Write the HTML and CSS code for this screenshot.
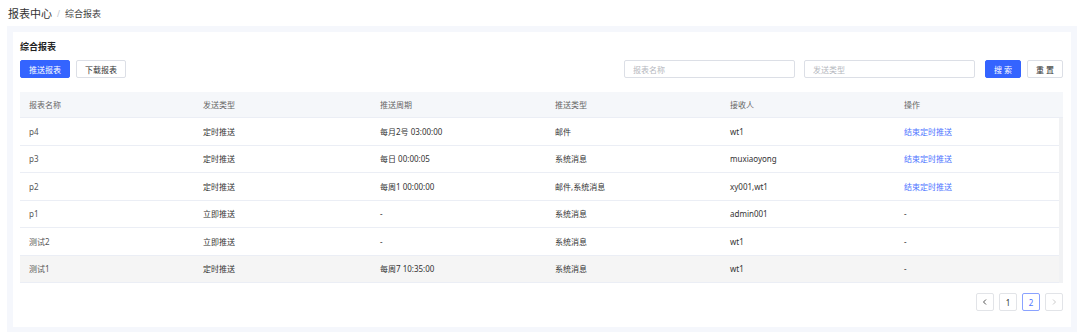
FILE: index.html
```html
<!DOCTYPE html>
<html lang="zh-CN">
<head>
    <meta charset="UTF-8">
    <title>综合报表 - 报表中心</title>
    <link rel="stylesheet" href="styles.css">
</head>
<body>
    <div class="breadcrumb">
        <span class="crumb-root">报表中心</span>
        <span class="crumb-sep">/</span>
        <span class="crumb-current">综合报表</span>
    </div>

    <div class="panel">
        <div class="card">
            <h2 class="card-title">综合报表</h2>

            <div class="toolbar">
                <div class="toolbar-left">
                    <button class="btn btn-primary">推送报表</button>
                    <button class="btn">下载报表</button>
                </div>
                <div class="toolbar-right">
                    <input class="field" type="text" placeholder="报表名称">
                    <input class="field" type="text" placeholder="发送类型">
                    <button class="btn btn-primary btn-sm">搜 索</button>
                    <button class="btn btn-sm">重 置</button>
                </div>
            </div>

            <div class="table">
                <div class="row head">
                    <div>报表名称</div>
                    <div>发送类型</div>
                    <div>推送周期</div>
                    <div>推送类型</div>
                    <div>接收人</div>
                    <div>操作</div>
                </div>
                <div class="table-body">
                    <div class="row">
                        <div class="muted">p4</div>
                        <div>定时推送</div>
                        <div>每月2号 03:00:00</div>
                        <div>邮件</div>
                        <div>wt1</div>
                        <div><a href="#" class="link">结束定时推送</a></div>
                    </div>
                    <div class="row">
                        <div class="muted">p3</div>
                        <div>定时推送</div>
                        <div>每日 00:00:05</div>
                        <div>系统消息</div>
                        <div>muxiaoyong</div>
                        <div><a href="#" class="link">结束定时推送</a></div>
                    </div>
                    <div class="row">
                        <div class="muted">p2</div>
                        <div>定时推送</div>
                        <div>每周1 00:00:00</div>
                        <div>邮件,系统消息</div>
                        <div>xy001,wt1</div>
                        <div><a href="#" class="link">结束定时推送</a></div>
                    </div>
                    <div class="row">
                        <div class="muted">p1</div>
                        <div>立即推送</div>
                        <div>-</div>
                        <div>系统消息</div>
                        <div>admin001</div>
                        <div>-</div>
                    </div>
                    <div class="row">
                        <div class="muted">测试2</div>
                        <div>立即推送</div>
                        <div>-</div>
                        <div>系统消息</div>
                        <div>wt1</div>
                        <div>-</div>
                    </div>
                    <div class="row hover">
                        <div class="muted">测试1</div>
                        <div>定时推送</div>
                        <div>每周7 10:35:00</div>
                        <div>系统消息</div>
                        <div>wt1</div>
                        <div>-</div>
                    </div>
                </div>
            </div>

            <div class="pager">
                <button class="page-btn">
                    <svg width="8" height="8" viewBox="0 0 8 8"><path d="M5 1.5 L2.5 4 L5 6.5" fill="none" stroke="#555" stroke-width="1"/></svg>
                </button>
                <button class="page-btn">1</button>
                <button class="page-btn active">2</button>
                <button class="page-btn disabled">
                    <svg width="8" height="8" viewBox="0 0 8 8"><path d="M3 1.5 L5.5 4 L3 6.5" fill="none" stroke="#ccc" stroke-width="1"/></svg>
                </button>
            </div>
        </div>
    </div>
</body>
</html>
```

FILE: styles.css
```css
* {
    margin: 0;
    padding: 0;
    box-sizing: border-box;
}

body {
    font-family: 'Noto Sans', 'Noto Sans CJK SC', sans-serif;
    background: #fff;
    color: #333;
    width: 1080px;
    height: 335px;
    overflow: hidden;
}

.breadcrumb {
    height: 26px;
    padding-left: 8px;
    display: flex;
    align-items: center;
    gap: 5px;
}

.crumb-root {
    font-size: 11px;
    color: #333;
}

.crumb-sep {
    font-size: 8px;
    color: #c0c4cc;
}

.crumb-current {
    font-size: 9px;
    color: #444;
}

.panel {
    margin: 0 3px 0 7px;
    padding: 6px 6px 5px 6px;
    background: #f5f7fc;
}

.card {
    background: #fff;
    height: 295px;
    padding: 8px 8px 0 7px;
}

.card-title {
    font-size: 9px;
    font-weight: 700;
    line-height: 13px;
    color: #222;
}

.toolbar {
    margin-top: 7px;
    display: flex;
    justify-content: space-between;
    height: 18px;
}

.toolbar-left {
    display: flex;
    gap: 6px;
}

.toolbar-right {
    display: flex;
    gap: 9px;
}

.btn {
    width: 50px;
    height: 18px;
    font-family: inherit;
    font-size: 8px;
    color: #333;
    background: #fff;
    border: 1px solid #dcdfe6;
    border-radius: 2px;
}

.btn-primary {
    background: #3464ff;
    border-color: #3464ff;
    color: #fff;
}

.btn-sm {
    width: 36px;
    margin-left: 1px;
}

.btn-sm + .btn-sm {
    margin-left: -3px;
}

.field {
    width: 171px;
    height: 18px;
    padding: 0 8px;
    font-family: inherit;
    font-size: 8px;
    border: 1px solid #dcdfe6;
    border-radius: 2px;
    outline: none;
}

.field::placeholder {
    color: #b5b8be;
}

.table {
    margin-top: 14px;
    font-size: 8px;
}

.row {
    display: grid;
    grid-template-columns: 174px 177px 175px 175px 174px 1fr;
    align-items: center;
    height: 27.5px;
    border-bottom: 1px solid #ebeef5;
}

.row > div {
    padding-left: 9px;
}

.row.head {
    height: 26px;
    background: #f5f7fa;
    color: #666;
    border-bottom: 1px solid #ebeef5;
}

.table-body {
    border-right: 4px solid #f1f2f4;
}

.row.hover {
    background: #f5f5f5;
}

.muted {
    color: #555;
}

.link {
    color: #4d74ff;
    text-decoration: none;
}

.pager {
    margin-top: 10px;
    display: flex;
    justify-content: flex-end;
    gap: 5px;
}

.page-btn {
    width: 18px;
    height: 18px;
    display: flex;
    align-items: center;
    justify-content: center;
    font-family: inherit;
    font-size: 8px;
    color: #333;
    background: #fff;
    border: 1px solid #e2e4e8;
    border-radius: 2px;
}

.page-btn.active {
    border-color: #8aa2ff;
    color: #4d74ff;
}
```
